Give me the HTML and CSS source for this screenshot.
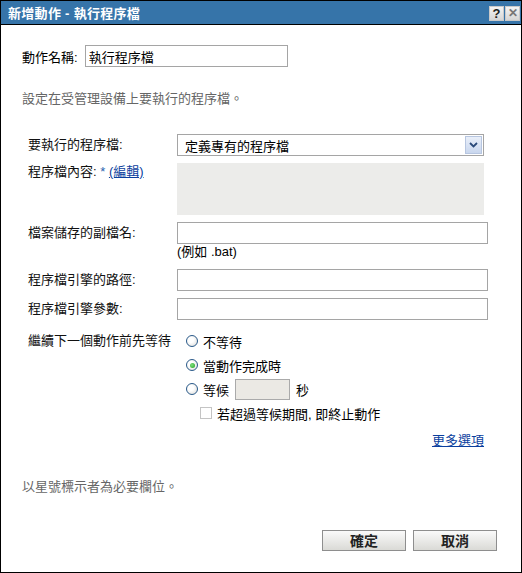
FILE: index.html
```html
<!DOCTYPE html>
<html lang="zh-TW">

<head>
  <meta charset="UTF-8">
  <title>新增動作 - 執行程序檔</title>
  <link rel="stylesheet" href="styles.css">
</head>

<body>
  <div class="dialog">
    <div class="titlebar">
      <span class="title">新增動作 - 執行程序檔</span>
      <div class="title-tools">
        <span class="tool help">?</span>
        <span class="tool close">✕</span>
      </div>
    </div>

    <div class="content">
      <div class="name-row">
        <label>動作名稱:</label>
        <input type="text" class="text name-input" value="執行程序檔">
      </div>

      <p class="desc">設定在受管理設備上要執行的程序檔。</p>

      <div class="form">
        <label class="lbl">要執行的程序檔:</label>
        <div class="select">
          <span class="select-value">定義專有的程序檔</span>
          <span class="select-btn">
            <svg width="9" height="6" viewBox="0 0 9 6"><path d="M1 1 L4.5 4.5 L8 1" fill="none" stroke="#2b4a7a" stroke-width="1.8"/></svg>
          </span>
        </div>

        <label class="lbl lbl-top">程序檔內容: <span class="req">*</span> <a href="#" class="link">(編輯)</a></label>
        <div class="script-box"></div>

        <label class="lbl">檔案儲存的副檔名:</label>
        <input type="text" class="text wide">
        <span></span>
        <span class="hint">(例如 .bat)</span>

        <label class="lbl">程序檔引擎的路徑:</label>
        <input type="text" class="text wide row-gap">

        <label class="lbl">程序檔引擎參數:</label>
        <input type="text" class="text wide">

        <label class="lbl lbl-wait">繼續下一個動作前先等待</label>
        <div class="options">
          <div class="opt"><span class="radio"></span>不等待</div>
          <div class="opt"><span class="radio checked"></span>當動作完成時</div>
          <div class="opt"><span class="radio"></span>等候<input type="text" class="text secs" disabled><span class="unit">秒</span></div>
          <div class="opt sub"><span class="check"></span>若超過等候期間, 即終止動作</div>
        </div>
      </div>

      <div class="more"><a href="#" class="link">更多選項</a></div>

      <p class="note">以星號標示者為必要欄位。</p>

      <div class="buttons">
        <button type="button">確定</button>
        <button type="button">取消</button>
      </div>
    </div>
  </div>
</body>

</html>
```

FILE: styles.css
```css
body {
  margin: 0;
  font-family: "Liberation Sans", "Noto Sans CJK TC", sans-serif;
  font-size: 13px;
  color: #000;
  background: #fff;
}

.dialog {
  width: 522px;
  height: 573px;
  box-sizing: border-box;
  border: 1px solid #000;
  background: #fff;
}

.titlebar {
  height: 23px;
  background-color: #3674a9;
  border-bottom: 1px solid #000;
  display: flex;
  align-items: center;
  justify-content: space-between;
  padding: 0 1px 0 7px;
}

.title {
  color: #fff;
  font-weight: bold;
  font-size: 13px;
  letter-spacing: 0.3px;
}

.title-tools {
  display: flex;
  gap: 1px;
  margin-top: 1px;
}

.tool {
  width: 15px;
  height: 15px;
  box-sizing: border-box;
  border: 1px solid #c9c9c9;
  background: linear-gradient(#f4f4f4, #d6d6d6);
  display: flex;
  align-items: center;
  justify-content: center;
  font-weight: bold;
  font-size: 13px;
  line-height: 1;
}

.help {
  color: #222;
}

.close {
  color: #777;
  font-size: 12px;
}

.content {
  padding: 0 24px 0 21px;
}

.name-row {
  display: flex;
  align-items: center;
  gap: 7px;
  padding-top: 20px;
}

.text {
  box-sizing: border-box;
  height: 22px;
  border: 1px solid #a5a5a5;
  padding: 0 3px;
  font: inherit;
  color: #000;
  background: #fff;
  outline: none;
}

.name-input {
  width: 203px;
}

.desc {
  margin: 24px 0 0;
  line-height: 16px;
  color: #666;
}

.form {
  display: grid;
  grid-template-columns: 149px 311px;
  align-items: center;
  margin: 27px 0 0 6px;
  row-gap: 7px;
}

.lbl {
  line-height: 16px;
  color: #111;
}

.lbl-top {
  align-self: start;
  margin-top: 1px;
}

.select {
  width: 307px;
  height: 22px;
  box-sizing: border-box;
  border: 1px solid #a5a5a5;
  display: flex;
  align-items: center;
  justify-content: space-between;
  padding: 0 1px 0 7px;
}

.select-btn {
  width: 17px;
  height: 18px;
  box-sizing: border-box;
  border: 1px solid #b7c6e0;
  background: linear-gradient(#e9eff9, #c9d7ee);
  display: flex;
  align-items: center;
  justify-content: center;
}

.req {
  color: #2a64b0;
}

.link {
  color: #0b3f9e;
  text-decoration: underline;
}

.script-box {
  width: 307px;
  height: 52px;
  background: #ececea;
}

.wide {
  width: 311px;
}

.hint {
  line-height: 16px;
  margin-top: -7px;
  margin-bottom: 2px;
}

.lbl-wait {
  align-self: start;
  margin-top: 6px;
}

.options {
  margin-top: 2px;
  margin-left: 9px;
}

.opt {
  height: 24px;
  display: flex;
  align-items: center;
}

.radio {
  width: 12px;
  height: 12px;
  box-sizing: border-box;
  border-radius: 50%;
  border: 1px solid #2a5a8a;
  background: radial-gradient(circle at 40% 40%, #fff 30%, #d8d8d4 100%);
  margin-right: 5px;
  display: flex;
  align-items: center;
  justify-content: center;
}

.radio.checked::after {
  content: "";
  width: 5px;
  height: 5px;
  border-radius: 50%;
  background: radial-gradient(circle at 40% 40%, #7fe07f, #21a121);
}

.secs {
  width: 55px;
  height: 21px;
  margin-left: 6px;
  background: #ebe9e4;
  border-color: #aaa;
}

.unit {
  margin-left: 6px;
}

.sub {
  padding-left: 14px;
}

.check {
  width: 12px;
  height: 12px;
  box-sizing: border-box;
  border: 1px solid #c4c4c4;
  background: #fff;
  margin-right: 5px;
}

.more {
  text-align: right;
  width: 462px;
  line-height: 16px;
  margin-top: 8px;
}

.note {
  margin: 30px 0 0;
  line-height: 16px;
  color: #666;
}

.buttons {
  display: flex;
  justify-content: flex-end;
  gap: 7px;
  margin-top: 35px;
}

button {
  width: 84px;
  height: 21px;
  border: 1px solid #8e8e8e;
  background: linear-gradient(#fafafa, #dadad6);
  font-family: inherit;
  font-size: 14px;
  font-weight: bold;
  color: #222;
  padding: 0;
  line-height: 1;
}
```
